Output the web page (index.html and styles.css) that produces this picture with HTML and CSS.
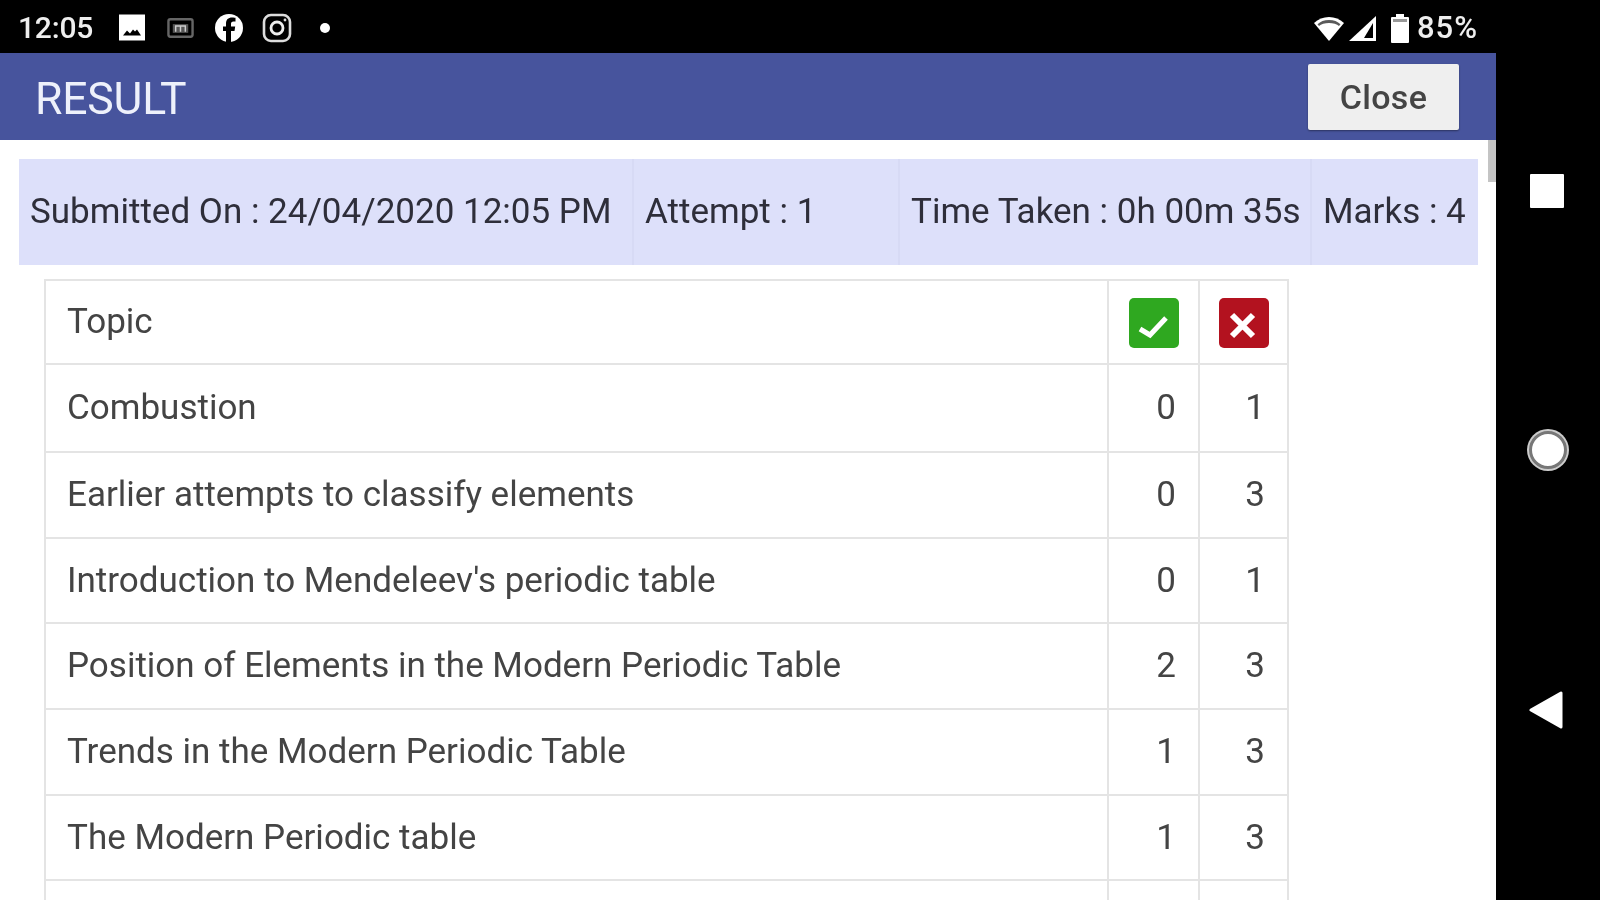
FILE: index.html
```html
<!DOCTYPE html>
<html lang="en">
<head>
<meta charset="utf-8">
<title>Result</title>
<link rel="stylesheet" href="styles.css">
</head>
<body>
<div class="device">
  <div class="screen">
    <div class="status">
      <span class="clock">12:05</span>
      <svg class="si si-photo" viewBox="0 0 26 26"><path fill="#fff" d="M0 0h26v26H0z"/><path fill="#000" d="M4 21l4-5 3 3 3-4 2 2 2-2 4 6z"/></svg>
      <svg class="si si-m" viewBox="0 0 28 24"><rect x="1.500" y="3" width="25" height="18" rx="2" fill="none" stroke="#666" stroke-width="2.500"/><rect x="6" y="8" width="16" height="9" fill="#555"/><path d="M9 16v-6h10v6M14 10v6" fill="none" stroke="#ccc" stroke-width="1.500"/></svg>
      <svg class="si si-fb" viewBox="0 0 30 30"><circle cx="15" cy="15" r="14" fill="#fff"/><path fill="#000" d="M17 29V18h3.500l.7-4.500H17v-2.500c0-1.300.6-2.400 2.500-2.400h2V4.800S19.800 4.500 18 4.500c-3.800 0-6 2.200-6 6.200v2.800H9V18h3v11z"/></svg>
      <svg class="si si-ig" viewBox="0 0 30 30"><rect x="2" y="2" width="26" height="26" rx="7" fill="none" stroke="#ddd" stroke-width="2.600"/><circle cx="15" cy="15" r="6" fill="none" stroke="#eee" stroke-width="2.800"/><circle cx="23" cy="7" r="1.400" fill="#ddd"/></svg>
      <span class="dot"></span>
      <span class="spacer"></span>
      <svg class="si si-wifi" viewBox="0 0 32 28"><path fill="#fff" d="M16 27L1 9c8-8 22-8 30 0z"/><path fill="#000" d="M16 9c-4 0-8 1-10 3l-1.500-1.800C7.500 7.500 11 6 16 6s8.500 1.500 11.500 4.200L26 12c-2-2-6-3-10-3z" opacity=".65"/></svg>
      <svg class="si si-signal" viewBox="0 0 29 28"><path fill="#fff" d="M28 2v25H1z"/><path fill="#000" d="M25 9v15h-9z"/></svg>
      <svg class="si si-batt" viewBox="0 0 20 30"><path fill="#fff" d="M6 1h8v3h4a1 1 0 0 1 1 1v24a1 1 0 0 1-1 1H2a1 1 0 0 1-1-1V5a1 1 0 0 1 1-1h4z"/><path fill="#999" d="M3 6h14v3H3z"/></svg>
      <span class="pct">85%</span>
    </div>
    <header class="appbar">
      <h1 class="title">RESULT</h1>
      <button class="close">Close</button>
    </header>
    <main class="content">
      <div class="scrollthumb"></div>
      <div class="info">
        <div class="info-cell c1">Submitted On : 24/04/2020 12:05 PM</div>
        <div class="info-cell c2">Attempt : 1</div>
        <div class="info-cell c3">Time Taken : 0h 00m 35s</div>
        <div class="info-cell c4">Marks : 4</div>
      </div>
      <table class="topics">
        <tr class="head">
          <td class="topic">Topic</td>
          <td class="num right-col icon-cell"><svg class="badge" viewBox="0 0 50 50"><rect width="50" height="50" rx="5" fill="#2fa820"/><path d="M11 31l10 6 16-17" fill="none" stroke="#fff" stroke-width="5"/></svg></td>
          <td class="num icon-cell"><svg class="badge" viewBox="0 0 50 50"><rect width="50" height="50" rx="5" fill="#b3121f"/><path d="M13 17l21 21M34 17L13 38" fill="none" stroke="#fff" stroke-width="6"/></svg></td>
        </tr>
        <tr class="tall"><td class="topic">Combustion</td><td class="num">0</td><td class="num">1</td></tr>
        <tr><td class="topic">Earlier attempts to classify elements</td><td class="num">0</td><td class="num">3</td></tr>
        <tr><td class="topic">Introduction to Mendeleev's periodic table</td><td class="num">0</td><td class="num">1</td></tr>
        <tr><td class="topic">Position of Elements in the Modern Periodic Table</td><td class="num">2</td><td class="num">3</td></tr>
        <tr><td class="topic">Trends in the Modern Periodic Table</td><td class="num">1</td><td class="num">3</td></tr>
        <tr><td class="topic">The Modern Periodic table</td><td class="num">1</td><td class="num">3</td></tr>
        <tr><td class="topic">&nbsp;</td><td class="num"></td><td class="num"></td></tr>
      </table>
    </main>
  </div>
  <nav class="navrail">
    <span class="nav-square"></span>
    <span class="nav-circle"></span>
    <svg class="nav-back" viewBox="0 0 34 38"><path fill="#fff" stroke="#fff" stroke-width="3" stroke-linejoin="round" d="M2 19L32 2v34z"/></svg>
  </nav>
</div>
</body>
</html>
```
FILE: styles.css
```css
* { box-sizing: border-box; }
html, body { margin: 0; height: 100%; background: #000; overflow: hidden; }
body { font-family: Roboto, "Liberation Sans", sans-serif; }
.device { display: flex; width: 1600px; height: 900px; background: #000; filter: blur(0.6px); }
.screen { width: 1496px; display: flex; flex-direction: column; height: 900px; }
.status { height: 53px; flex: none; display: flex; align-items: center; padding: 2px 18px 0 18px; color: #eee; background: #000; }
.clock { font-size: 30px; font-weight: 500; width: 101px; letter-spacing: -0.2px; }
.pct { font-size: 31px; font-weight: 500; margin-left: 7px; letter-spacing: 1px; }
.spacer { flex: 1; }
.si { display: block; flex: none; }
.si-photo { width: 26px; height: 27px; }
.si-m { width: 27px; height: 24px; margin-left: 22px; }
.si-fb { width: 30px; height: 30px; margin-left: 20px; }
.si-ig { width: 30px; height: 30px; margin-left: 18px; }
.dot { width: 10px; height: 10px; border-radius: 50%; background: #fff; margin-left: 28px; }
.si-wifi { width: 32px; height: 28px; }
.si-signal { width: 29px; height: 28px; margin-left: 3px; }
.si-batt { width: 20px; height: 30px; margin-left: 13px; }
.appbar { height: 87px; flex: none; background: #47549d; display: flex; align-items: center; justify-content: space-between; padding: 0 37px 0 35px; }
.title { margin: 4px 0 0; font-size: 44.500px; font-weight: 400; color: #eef1fb; letter-spacing: -0.2px; }
.close { width: 151px; height: 66px; margin-top: 1px; border: 0; border-radius: 2px; background: #efefef; color: #444; font-family: inherit; font-size: 34px; font-weight: 500; letter-spacing: 0.3px; box-shadow: 0 1px 2px rgba(0,0,0,.4); padding: 0; }
.content { position: relative; flex: 1; background: #fff; padding: 19px 18px 0 19px; overflow: hidden; }
.scrollthumb { position: absolute; right: 0; top: 0; width: 8px; height: 42px; background: #c4c4c4; }
.info { display: flex; height: 106px; background: #dde0fa; color: #2e2e3a; font-size: 35px; }
.info-cell { display: flex; align-items: center; padding: 0 0 2px 11px; border-right: 2px solid #d7daf5; white-space: nowrap; }
.c1 { width: 615px; }
.c2 { width: 266px; }
.c3 { width: 412px; }
.c4 { flex: 1; border-right: 0; }
.topics { border-collapse: collapse; margin: 14px 0 0 25px; width: 1245px; table-layout: fixed; color: #444; font-size: 35px; }
.topics td { border: 2px solid #e4e4e4; height: 85.700px; padding: 0 0 1px; }
.topics .head td { height: 84px; }
.topics .tall td { height: 88px; }
.topics .topic { padding-left: 21px; }
.topics .num { width: 89px; text-align: right; padding-right: 22px; }
.topics .right-col { width: 91px; }
.topics .icon-cell { text-align: center; padding: 0; }
.badge { display: block; width: 50px; height: 50px; margin: 1px auto 0; }
.navrail { position: relative; width: 104px; background: #000; }
.nav-square { position: absolute; left: 34px; top: 174px; width: 34px; height: 34px; background: #fff; border-radius: 1px; }
.nav-circle { position: absolute; left: 33px; top: 431px; width: 38px; height: 38px; border-radius: 50%; background: #fff; border: 3px solid #777; box-shadow: 0 0 0 2px #ccc; }
.nav-back { position: absolute; left: 33px; top: 691px; width: 34px; height: 38px; }
```
